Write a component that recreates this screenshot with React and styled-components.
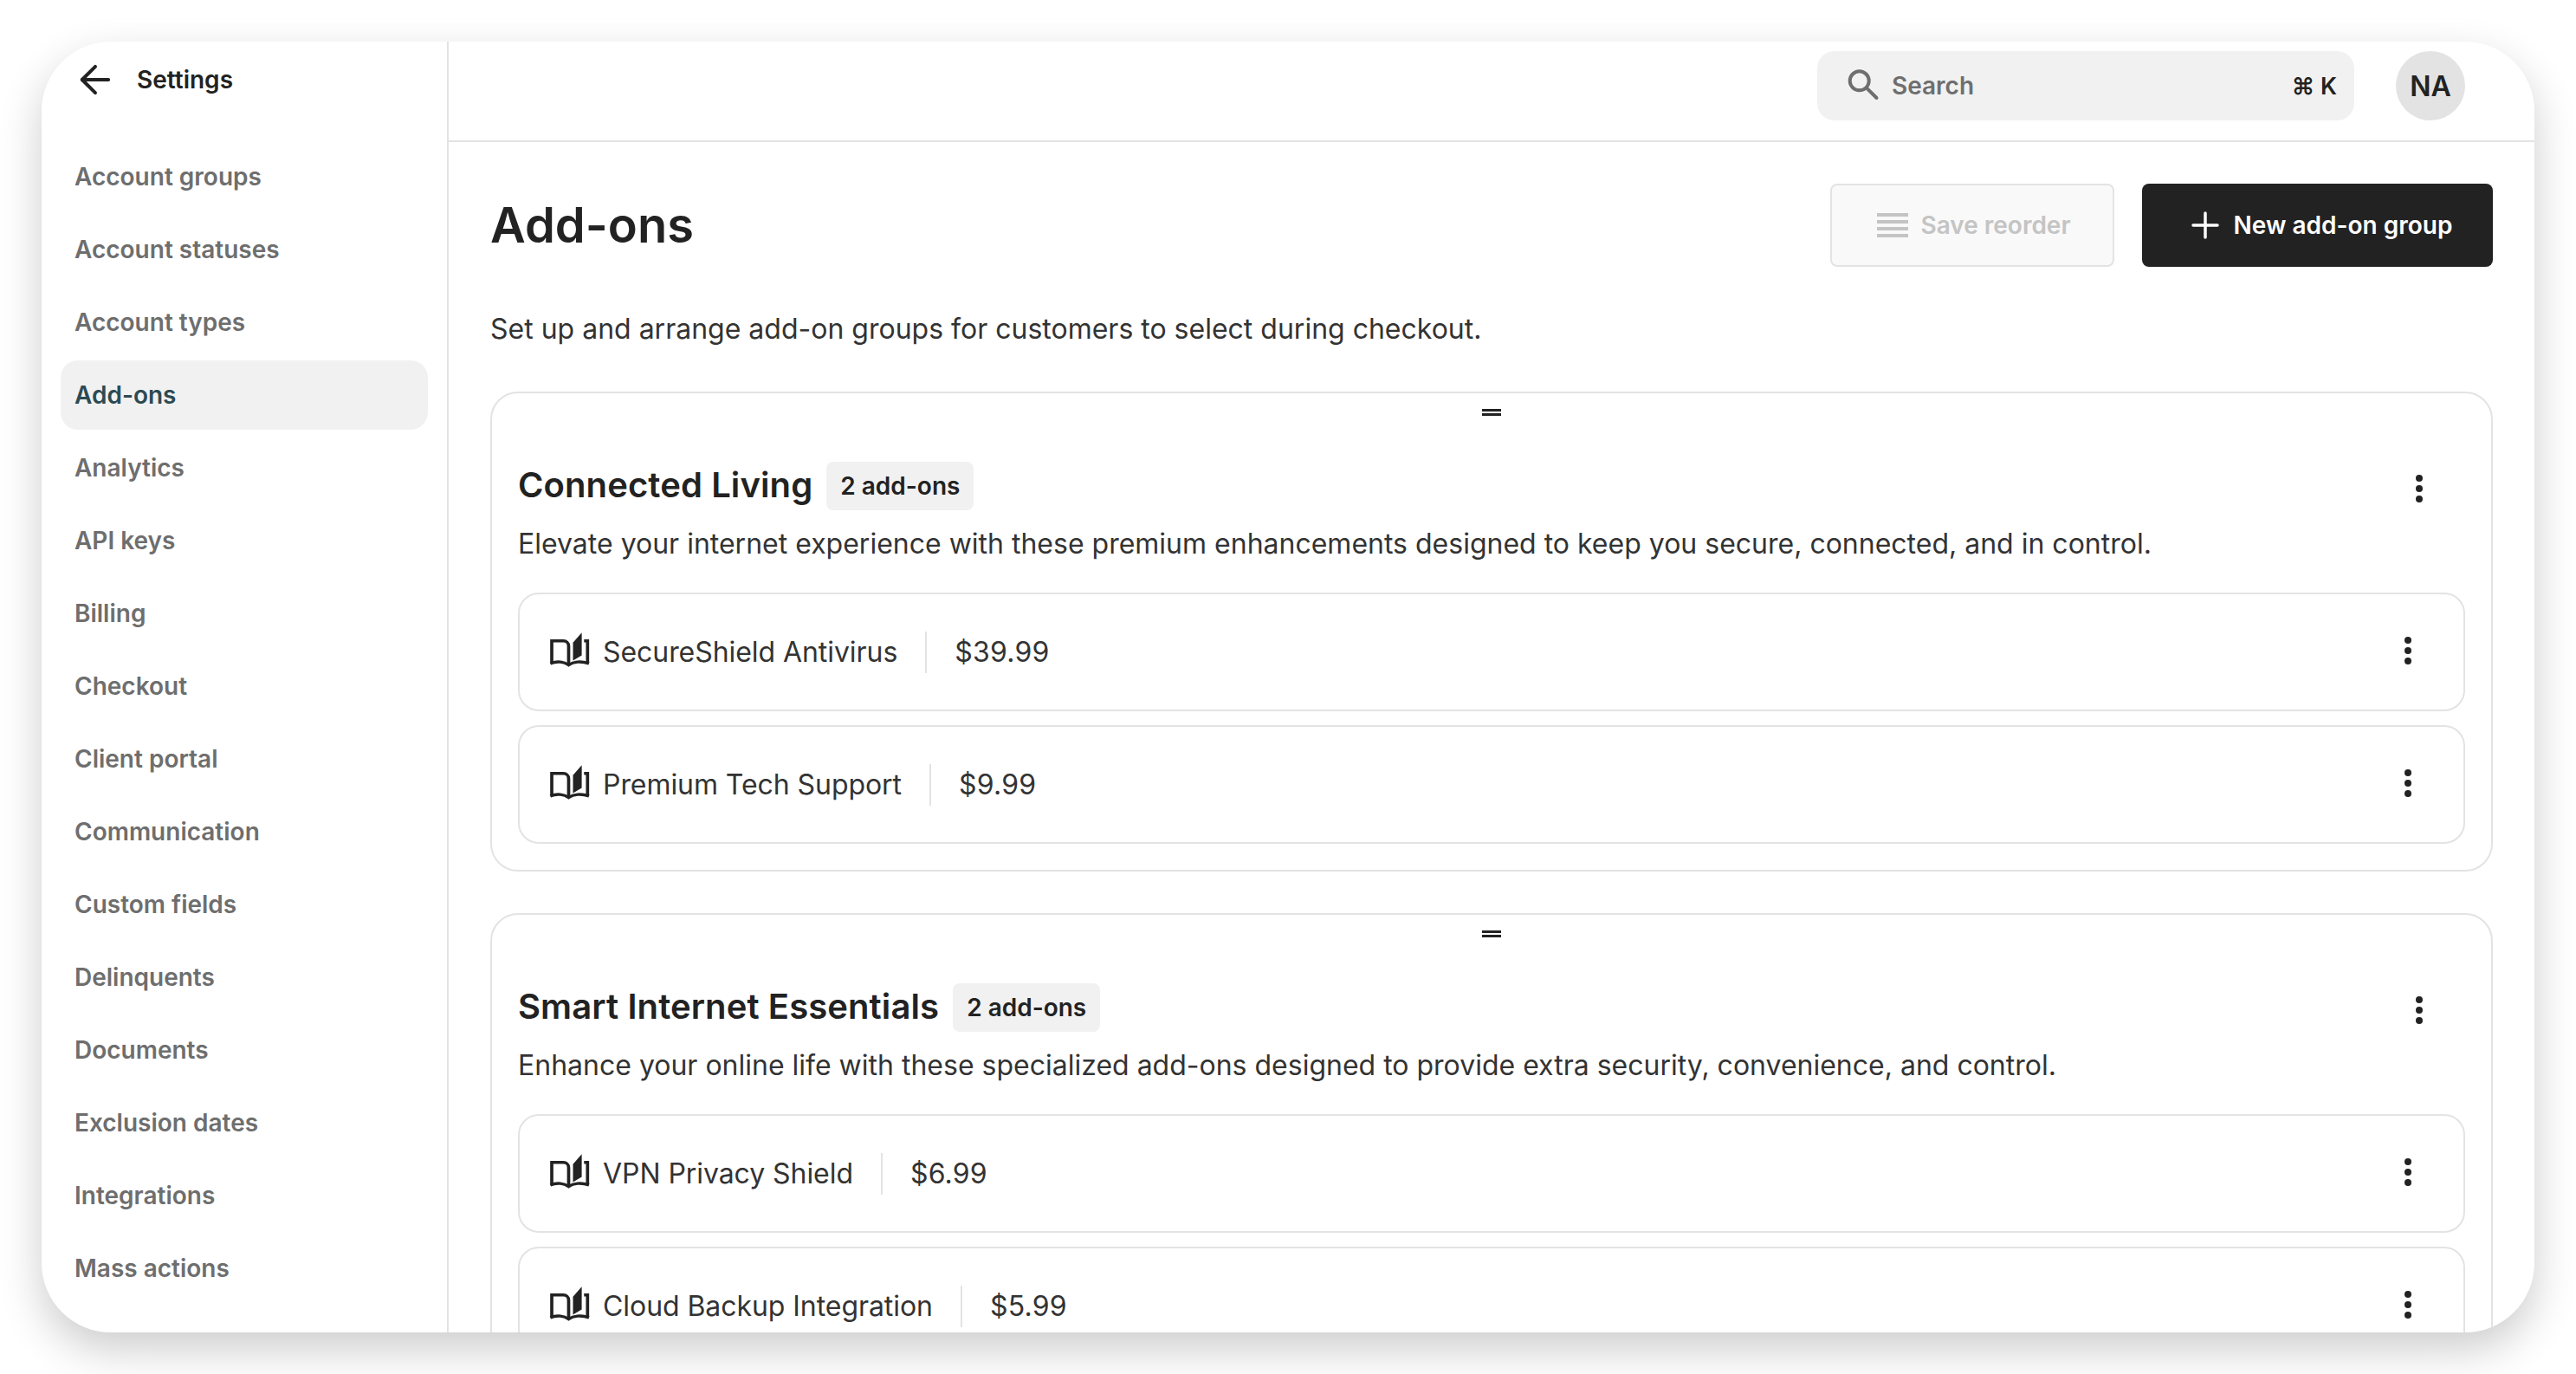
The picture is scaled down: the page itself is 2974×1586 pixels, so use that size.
import React from 'react';
import styled, { createGlobalStyle } from 'styled-components';
import { ArrowLeft, Plus } from 'lucide-react';

const GlobalStyle = createGlobalStyle`
  html, body {
    margin: 0;
    padding: 0;
    background: #fff;
  }
  body {
    font-family: 'Inter', 'Liberation Sans', sans-serif;
    color: #222;
  }
  * {
    box-sizing: border-box;
  }
`;

const Page = styled.div`
  width: 2974px;
  height: 1586px;
  padding: 48px;
  overflow: hidden;
`;

const Frame = styled.div`
  display: flex;
  width: 2878px;
  height: 1490px;
  background: #fff;
  border-radius: 80px;
  box-shadow: 0 20px 50px rgba(0, 0, 0, 0.2);
  overflow: hidden;
`;

const Sidebar = styled.aside`
  flex: 0 0 470px;
  border-right: 2px solid #e3e3e3;
  padding: 0 22px;
`;

const SidebarTitle = styled.div`
  display: flex;
  align-items: center;
  gap: 22px;
  height: 88px;
  padding-left: 14px;
  font-size: 28px;
  font-weight: 600;
  color: #222;
`;

const NavList = styled.nav`
  display: flex;
  flex-direction: column;
  gap: 4px;
  margin-top: 28px;
`;

const NavItem = styled.a`
  display: flex;
  align-items: center;
  height: 80px;
  padding-left: 16px;
  border-radius: 20px;
  font-size: 28px;
  font-weight: 600;
  color: ${(p) => (p.$active ? '#2d4a52' : '#6e6e6e')};
  background: ${(p) => (p.$active ? '#f1f1f1' : 'transparent')};
`;

const Main = styled.main`
  flex: 1;
  min-width: 0;
`;

const TopBar = styled.header`
  display: flex;
  justify-content: flex-end;
  align-items: flex-start;
  gap: 48px;
  height: 116px;
  padding: 11px 80px 0 0;
  border-bottom: 2px solid #e3e3e3;
`;

const SearchBox = styled.div`
  display: flex;
  align-items: center;
  width: 620px;
  height: 80px;
  padding: 0 20px 0 32px;
  border-radius: 20px;
  background: #f1f1f1;
  color: #6e6e6e;
  font-size: 28px;
  font-weight: 600;
`;

const SearchLabel = styled.span`
  flex: 1;
  margin-left: 10px;
`;

const Shortcut = styled.span`
  color: #222;
  font-size: 27px;
`;

const Avatar = styled.div`
  display: flex;
  align-items: center;
  justify-content: center;
  width: 80px;
  height: 80px;
  border-radius: 50%;
  background: #e3e3e3;
  font-size: 32px;
  font-weight: 600;
`;

const Content = styled.div`
  padding: 48px 48px 0 48px;
`;

const TitleRow = styled.div`
  display: flex;
  align-items: center;
  justify-content: space-between;
`;

const PageTitle = styled.h1`
  margin: 0;
  font-size: 56px;
  font-weight: 600;
  color: #222;
`;

const Actions = styled.div`
  display: flex;
  gap: 32px;
`;

const Button = styled.button`
  display: flex;
  align-items: center;
  justify-content: center;
  gap: ${(p) => (p.$primary ? '9px' : '14px')};
  height: 96px;
  width: ${(p) => (p.$primary ? '405px' : '328px')};
  padding: 0 0 0 ${(p) => (p.$primary ? '2px' : '4px')};
  border-radius: 8px;
  font-family: inherit;
  font-size: 28px;
  font-weight: 600;
  color: ${(p) => (p.$primary ? '#fff' : '#c4c4c4')};
  background: ${(p) => (p.$primary ? '#222' : '#f9f9f9')};
  border: ${(p) => (p.$primary ? 'none' : '2px solid #e3e3e3')};
`;

const Subtitle = styled.p`
  margin: 48px 0 0;
  font-size: 32px;
  line-height: 48px;
  color: #333;
`;

const GroupList = styled.div`
  display: flex;
  flex-direction: column;
  gap: 48px;
  margin-top: 48px;
`;

const Group = styled.section`
  padding: 0 30px 30px;
  border: 2px solid #e3e3e3;
  border-radius: 32px;
`;

const Handle = styled.div`
  display: flex;
  justify-content: center;
  padding-top: 18px;
  height: 76px;
`;

const GroupHead = styled.div`
  display: flex;
  align-items: center;
  justify-content: space-between;
  height: 62px;
  padding-right: 37px;
`;

const GroupTitleWrap = styled.div`
  display: flex;
  align-items: center;
  gap: 16px;
`;

const GroupTitle = styled.h2`
  margin: 0 0 3px;
  font-size: 40px;
  font-weight: 600;
  letter-spacing: 0.1px;
  color: #222;
`;

const Badge = styled.span`
  padding: 0 16px;
  height: 56px;
  display: flex;
  align-items: center;
  border-radius: 8px;
  background: #f1f1f1;
  font-size: 28px;
  font-weight: 600;
  color: #222;
`;

const GroupDesc = styled.p`
  margin: 12px 0 0;
  font-size: 32px;
  line-height: 48px;
  color: #333;
`;

const Rows = styled.div`
  display: flex;
  flex-direction: column;
  gap: 16px;
  margin-top: 32px;
`;

const Row = styled.div`
  display: flex;
  align-items: center;
  height: 137px;
  padding: 0 48px 0 33px;
  border: 2px solid #e3e3e3;
  border-radius: 24px;
`;

const RowName = styled.span`
  margin-left: 14px;
  font-size: 32px;
  letter-spacing: -0.06px;
  color: #333;
`;

const Divider = styled.span`
  width: 2px;
  height: 48px;
  margin: 0 32px;
  background: #e3e3e3;
`;

const Price = styled.span`
  flex: 1;
  font-size: 32px;
  letter-spacing: 0.2px;
  color: #333;
`;

const KebabSvg = styled.svg`
  width: 32px;
  height: 32px;
  fill: #222;
  margin-top: ${(p) => (p.$row ? '-4px' : '6px')};
`;

const Kebab = ({ row }) => (
  <KebabSvg $row={row} viewBox="0 0 32 32">
    <circle cx="16" cy="4" r="4" />
    <circle cx="16" cy="16" r="4" />
    <circle cx="16" cy="28" r="4" />
  </KebabSvg>
);

const BookSvg = styled.svg`
  width: 49px;
  height: 41px;
  flex: none;
  margin-bottom: 7px;
`;

const BookIcon = () => (
  <BookSvg viewBox="20 18 146 122" fill="none">
    <path d="M32 125 V50 H72 C82 50 90 58 90 68 V128" stroke="#222" strokeWidth="11" />
    <path d="M27 128 C50 118 75 122 90 133 C105 122 132 118 160 128" stroke="#222" strokeWidth="10" />
    <path d="M143 50 H155 V125" stroke="#222" strokeWidth="11" />
    <path d="M105 56 L135 22 V100 L105 118 Z" fill="#222" />
  </BookSvg>
);

const SearchIcon = () => (
  <svg width="44" height="44" viewBox="0 0 44 44" fill="none" stroke="#6e6e6e" strokeWidth="4">
    <circle cx="16.7" cy="16.3" r="11" />
    <path d="M24.8 24.4 L36.5 36" strokeLinecap="round" />
  </svg>
);

const Lines = () => (
  <svg width="36" height="28" viewBox="0 0 36 28" fill="#c4c4c4">
    <rect y="0" width="36" height="4" />
    <rect y="8" width="36" height="4" />
    <rect y="16" width="36" height="4" />
    <rect y="24" width="36" height="4" />
  </svg>
);

const HandleIcon = () => (
  <svg width="22" height="8" viewBox="0 0 22 8" fill="#222">
    <rect y="0" width="22" height="3" />
    <rect y="5" width="22" height="3" />
  </svg>
);

const navItems = [
  'Account groups',
  'Account statuses',
  'Account types',
  'Add-ons',
  'Analytics',
  'API keys',
  'Billing',
  'Checkout',
  'Client portal',
  'Communication',
  'Custom fields',
  'Delinquents',
  'Documents',
  'Exclusion dates',
  'Integrations',
  'Mass actions',
];

const groups = [
  {
    title: 'Connected Living',
    desc: 'Elevate your internet experience with these premium enhancements designed to keep you secure, connected, and in control.',
    items: [
      { name: 'SecureShield Antivirus', price: '$39.99' },
      { name: 'Premium Tech Support', price: '$9.99' },
    ],
  },
  {
    title: 'Smart Internet Essentials',
    desc: 'Enhance your online life with these specialized add-ons designed to provide extra security, convenience, and control.',
    items: [
      { name: 'VPN Privacy Shield', price: '$6.99' },
      { name: 'Cloud Backup Integration', price: '$5.99' },
    ],
  },
];

const App = () => (
  <Page>
    <GlobalStyle />
    <Frame>
      <Sidebar>
        <SidebarTitle>
          <ArrowLeft size={52} strokeWidth={1.85} color="#222" />
          Settings
        </SidebarTitle>
        <NavList>
          {navItems.map((item) => (
            <NavItem key={item} $active={item === 'Add-ons'}>
              {item}
            </NavItem>
          ))}
        </NavList>
      </Sidebar>
      <Main>
        <TopBar>
          <SearchBox>
            <SearchIcon />
            <SearchLabel>Search</SearchLabel>
            <Shortcut>⌘ K</Shortcut>
          </SearchBox>
          <Avatar>NA</Avatar>
        </TopBar>
        <Content>
          <TitleRow>
            <PageTitle>Add-ons</PageTitle>
            <Actions>
              <Button disabled>
                <Lines />
                Save reorder
              </Button>
              <Button $primary>
                <Plus size={48} strokeWidth={1.75} />
                New add-on group
              </Button>
            </Actions>
          </TitleRow>
          <Subtitle>Set up and arrange add-on groups for customers to select during checkout.</Subtitle>
          <GroupList>
            {groups.map((group) => (
              <Group key={group.title}>
                <Handle>
                  <HandleIcon />
                </Handle>
                <GroupHead>
                  <GroupTitleWrap>
                    <GroupTitle>{group.title}</GroupTitle>
                    <Badge>{group.items.length} add-ons</Badge>
                  </GroupTitleWrap>
                  <Kebab />
                </GroupHead>
                <GroupDesc>{group.desc}</GroupDesc>
                <Rows>
                  {group.items.map((item) => (
                    <Row key={item.name}>
                      <BookIcon />
                      <RowName>{item.name}</RowName>
                      <Divider />
                      <Price>{item.price}</Price>
                      <Kebab row />
                    </Row>
                  ))}
                </Rows>
              </Group>
            ))}
          </GroupList>
        </Content>
      </Main>
    </Frame>
  </Page>
);

export default App;
